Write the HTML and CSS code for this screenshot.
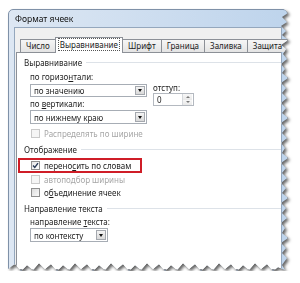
FILE: index.html
```html
<!DOCTYPE html>
<html lang="ru">
<head>
<meta charset="utf-8">
<title>Формат ячеек</title>
<link rel="stylesheet" href="styles.css">
</head>
<body>
<div class="stage">
  <div class="shadow">
    <div class="window">
      <div class="titlebar">Формат ячеек</div>
      <div class="client">
        <div class="tabs">
          <div class="tab">Число</div>
          <div class="tab active"><span class="focus">Выравнивание</span></div>
          <div class="tab">Шрифт</div>
          <div class="tab">Граница</div>
          <div class="tab">Заливка</div>
          <div class="tab">Защита</div>
        </div>
        <div class="panel">
          <div class="group-title">Выравнивание</div>
          <div class="group">
            <div class="align-row">
              <div class="col-main">
                <div class="label">по горизо<u>н</u>тали:</div>
                <div class="combo combo-wide"><span class="combo-text">по значению</span><span class="drop"></span></div>
                <div class="label tight">по <u>в</u>ертикали:</div>
                <div class="combo combo-wide second"><span class="combo-text">по нижнему краю</span><span class="drop"></span></div>
              </div>
              <div class="col-indent">
                <div class="label">отступ:</div>
                <div class="spin"><span class="spin-text">0</span><span class="spin-btns"><span class="up"></span><span class="down"></span></span></div>
              </div>
            </div>
            <div class="check disabled dist"><span class="box"></span><span class="ctext">Распределять по ширине</span></div>
          </div>
          <div class="group-title gt2">Отображение</div>
          <div class="group">
            <div class="check highlight"><span class="box checked"><svg viewBox="0 0 9 9" width="9" height="9"><path d="M2 4.5 L3.8 6.5 L7 2.2" fill="none" stroke="#2b3b57" stroke-width="1.4"/></svg></span><span class="ctext">перено<u>с</u>ить по словам</span></div>
            <div class="check disabled"><span class="box"></span><span class="ctext">автоподбор ширины</span></div>
            <div class="check"><span class="box"></span><span class="ctext">о<u>б</u>ъединение ячеек</span></div>
          </div>
          <div class="group-title gt3">Направление текста</div>
          <div class="group">
            <div class="label dir">направление <u>т</u>екста:</div>
            <div class="combo combo-short"><span class="combo-text">по контексту</span><span class="drop"></span></div>
          </div>
        </div>
      </div>
    </div>
  </div>
</div>
</body>
</html>
```
FILE: styles.css
```css
html, body {
  margin: 0;
  background: #fff;
}
body {
  font-family: "Noto Sans", "Open Sans", sans-serif;
  font-size: 8px;
  color: #1d1d1d;
  line-height: 11px;
}
.stage {
  padding: 9px 0 0 8px;
}
.shadow {
  width: 280px;
  height: 262px;
  filter: drop-shadow(2px 2px 1.5px rgba(0, 0, 0, 0.6));
}
.window {
  width: 100%;
  height: 100%;
  box-sizing: border-box;
  border: 1px solid #7f91a8;
  border-radius: 5px 5px 0 0;
  background: linear-gradient(to right, #dde7f3, #bed4ec);
  padding: 0 5px;
  display: flex;
  flex-direction: column;
  clip-path: polygon(0 0, 276px 0, 280px 4px, 274px 8px, 279px 13px, 273px 17px, 278px 22px, 274px 26px, 280px 31px, 273px 36px, 278px 40px, 275px 45px, 279px 50px, 273px 55px, 277px 60px, 274px 64px, 280px 69px, 273px 74px, 278px 79px, 274px 84px, 279px 89px, 273px 94px, 278px 99px, 274px 104px, 280px 109px, 273px 114px, 278px 119px, 274px 124px, 279px 129px, 273px 134px, 277px 139px, 274px 144px, 280px 149px, 273px 154px, 278px 159px, 274px 164px, 279px 169px, 273px 174px, 278px 179px, 274px 184px, 280px 189px, 273px 194px, 278px 199px, 274px 204px, 279px 209px, 273px 214px, 277px 219px, 274px 224px, 280px 229px, 273px 234px, 278px 239px, 274px 244px, 279px 249px, 274px 256px, 277px 261px, 270px 258px, 265px 262px, 259px 255px, 253px 260px, 247px 254px, 241px 261px, 235px 256px, 229px 262px, 223px 255px, 217px 260px, 211px 254px, 205px 261px, 199px 256px, 193px 262px, 187px 255px, 181px 260px, 175px 254px, 169px 261px, 163px 256px, 157px 262px, 151px 255px, 145px 260px, 139px 254px, 133px 261px, 127px 256px, 121px 262px, 115px 255px, 109px 260px, 103px 254px, 97px 261px, 91px 256px, 85px 262px, 79px 255px, 73px 260px, 67px 254px, 61px 261px, 55px 256px, 49px 262px, 43px 255px, 37px 260px, 31px 254px, 25px 261px, 19px 256px, 13px 262px, 7px 255px, 0 260px);
}
.titlebar {
  height: 17px;
  line-height: 17px;
  padding-left: 1px;
  font-size: 8.5px;
  color: #111;
}
.client {
  flex: 1;
  background: #f0f0f0;
  border: 1px solid #94a7bd;
  border-bottom: none;
  padding: 9px 0 0 1px;
  display: flex;
  flex-direction: column;
}
.tabs {
  display: flex;
  align-items: flex-end;
  padding-left: 4px;
  height: 15px;
  position: relative;
  z-index: 1;
}
.tab {
  height: 12px;
  line-height: 12px;
  padding: 0 5px;
  border: 1px solid #8c9097;
  border-bottom: none;
  background: linear-gradient(#f6f6f6, #e4e4e4);
  margin-right: -1px;
  white-space: nowrap;
  color: #222;
}
.tab.active {
  height: 15px;
  line-height: 14px;
  background: #fff;
  margin-bottom: -1px;
  padding: 0 3px;
  position: relative;
  z-index: 2;
}
.focus {
  outline: 1px dotted #555;
  outline-offset: 0;
  padding: 0 1px;
}
.panel {
  flex: 1;
  background: #fff;
  border: 1px solid #8c9097;
  border-right: none;
  padding: 4px 0 0 7px;
}
.group-title {
  display: flex;
  align-items: center;
  gap: 4px;
  color: #1d1d1d;
}
.group-title::after {
  content: "";
  flex: 1;
  height: 1px;
  background: #dde2e8;
}
.gt2 { margin-top: 5px; }
.gt3 { margin-top: 5px; }
.group {
  padding-left: 6px;
}
.label {
  margin-top: 3px;
}
.label.tight {
  margin-top: 1px;
}
.label.dir {
  margin-top: 2px;
}
u {
  text-decoration-thickness: 1px;
  text-underline-offset: 1px;
}
.align-row {
  display: flex;
  gap: 6px;
}
.col-main {
  width: 117px;
}
.col-indent {
  padding-top: 11px;
}
.combo {
  margin-top: 2px;
  height: 13px;
  box-sizing: border-box;
  border: 1px solid #a7adb5;
  background: #fff;
  display: flex;
  align-items: center;
  justify-content: space-between;
  padding: 0 1px 0 3px;
}
.combo-wide { width: 117px; }
.combo-wide.second { margin-top: 1px; height: 14px; }
.combo-short { width: 78px; margin-top: 1px; height: 14px; }
.combo-text {
  white-space: nowrap;
}
.drop {
  width: 10px;
  height: 9px;
  box-sizing: border-box;
  border: 1px solid #a4a8ae;
  background: linear-gradient(#f4f4f4, #d9d9d9);
  display: flex;
  align-items: center;
  justify-content: center;
}
.combo-wide.second .drop, .combo-short .drop {
  height: 10px;
}
.drop::after {
  content: "";
  border-left: 2.5px solid transparent;
  border-right: 2.5px solid transparent;
  border-top: 3px solid #111;
}
.spin {
  width: 41px;
  height: 13px;
  box-sizing: border-box;
  border: 1px solid #b4b9c0;
  background: #fff;
  display: flex;
  align-items: center;
  justify-content: space-between;
  padding: 0 1px 0 3px;
}
.spin-btns {
  width: 9px;
  height: 11px;
  display: flex;
  flex-direction: column;
  border-left: 1px solid #d5d8dc;
}
.spin-btns span {
  flex: 1;
  display: flex;
  align-items: center;
  justify-content: center;
  background: linear-gradient(#f7f7f7, #e8e8e8);
}
.spin-btns .up::after {
  content: "";
  border-left: 2px solid transparent;
  border-right: 2px solid transparent;
  border-bottom: 2px solid #777;
}
.spin-btns .down::after {
  content: "";
  border-left: 2px solid transparent;
  border-right: 2px solid transparent;
  border-top: 2px solid #777;
}
.check {
  display: flex;
  align-items: center;
  gap: 4px;
  height: 11px;
  margin-top: 2px;
  padding-left: 1px;
  white-space: nowrap;
}
.check.dist {
  margin-top: 4px;
}
.box {
  width: 9px;
  height: 9px;
  flex: none;
  box-sizing: border-box;
  border: 1px solid #8f8f8f;
  background: linear-gradient(135deg, #dcdcdc, #fafafa);
  display: flex;
}
.box.checked {
  background: linear-gradient(135deg, #e6e6e6, #fff);
}
.box svg {
  margin: -1px;
}
.check.disabled {
  color: #a6a6a6;
}
.check.disabled .box {
  border-color: #c9c9c9;
  background: #f5f5f5;
}
.highlight {
  margin-top: 3px;
  margin-left: -12px;
  width: 124px;
  height: 15px;
  box-sizing: border-box;
  border: 2px solid #cf1d27;
  padding-left: 11px;
}
.highlight + .check {
  margin-top: 1px;
}
```
